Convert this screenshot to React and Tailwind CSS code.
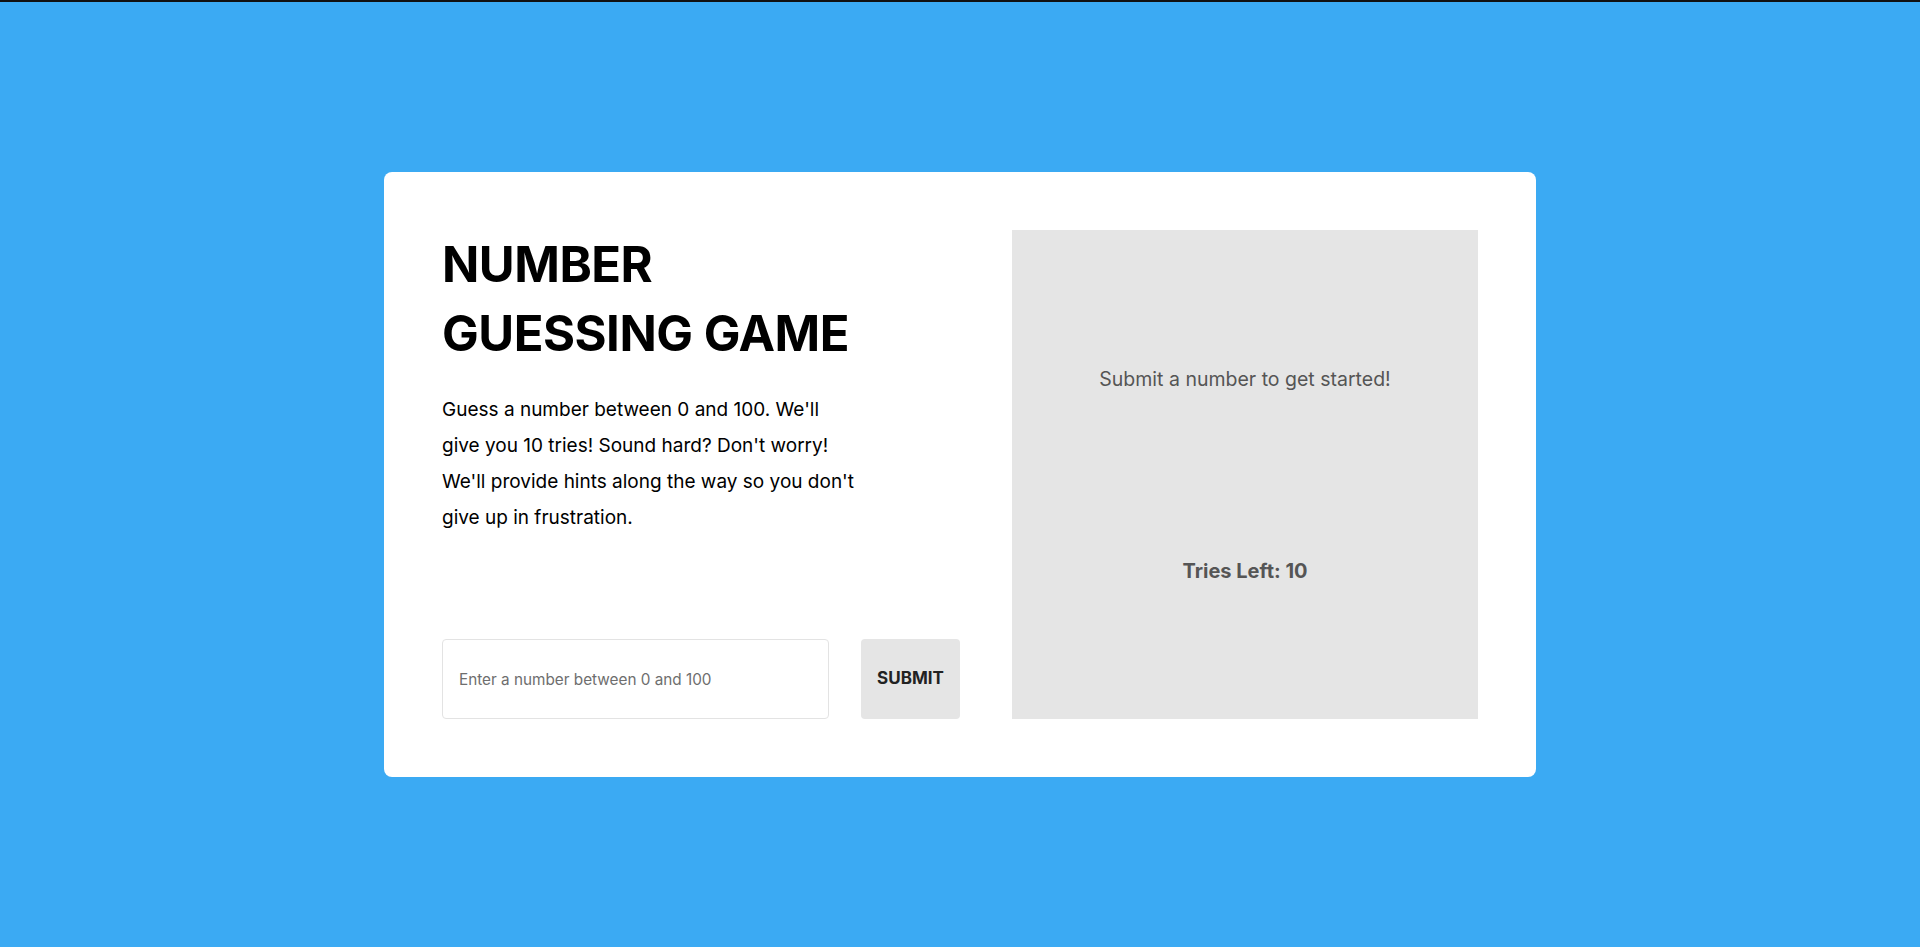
import React from "react";

export default function App() {
  return (
    <div
      className="min-h-screen w-full flex items-center justify-center bg-[#3baaf3] border-t-2 border-[#111]"
      style={{ fontFamily: "Inter, 'Noto Sans', sans-serif" }}
    >
      <div className="w-[1152px] bg-white rounded-[8px] p-[58px] flex gap-[52px]">
        <div className="w-[518px] flex flex-col">
          <h1 className="text-[49px] leading-[69px] font-bold text-black tracking-[-0.01em]">
            NUMBER
            <br />
            GUESSING GAME
          </h1>
          <p className="mt-[24px] text-[19px] leading-[36px] text-black">
            Guess a number between 0 and 100. We'll
            <br />
            give you 10 tries! Sound hard? Don't worry!
            <br />
            We'll provide hints along the way so you don't
            <br />
            give up in frustration.
          </p>
          <div className="mt-auto flex gap-[32px] h-[80px]">
            <input
              type="text"
              placeholder="Enter a number between 0 and 100"
              className="flex-1 h-full border border-[#e3e3e3] rounded-[4px] px-[16px] text-[15.3px] text-[#222] placeholder:text-[#6e6e6e] outline-none"
              style={{ fontFamily: "Inter, 'Liberation Sans', sans-serif" }}
            />
            <button className="w-[99px] h-full bg-[#e5e5e5] rounded-[4px] text-[17px] font-bold text-[#222]">
              SUBMIT
            </button>
          </div>
        </div>
        <div className="w-[466px] h-[489px] bg-[#e5e5e5] flex flex-col items-center justify-center">
          <p className="text-[19.5px] leading-[40px] text-[#555] mb-[150px]">Submit a number to get started!</p>
          <p className="text-[20px] leading-[40px] font-bold text-[#555] mt-[2px]">Tries Left: 10</p>
        </div>
      </div>
    </div>
  );
}
